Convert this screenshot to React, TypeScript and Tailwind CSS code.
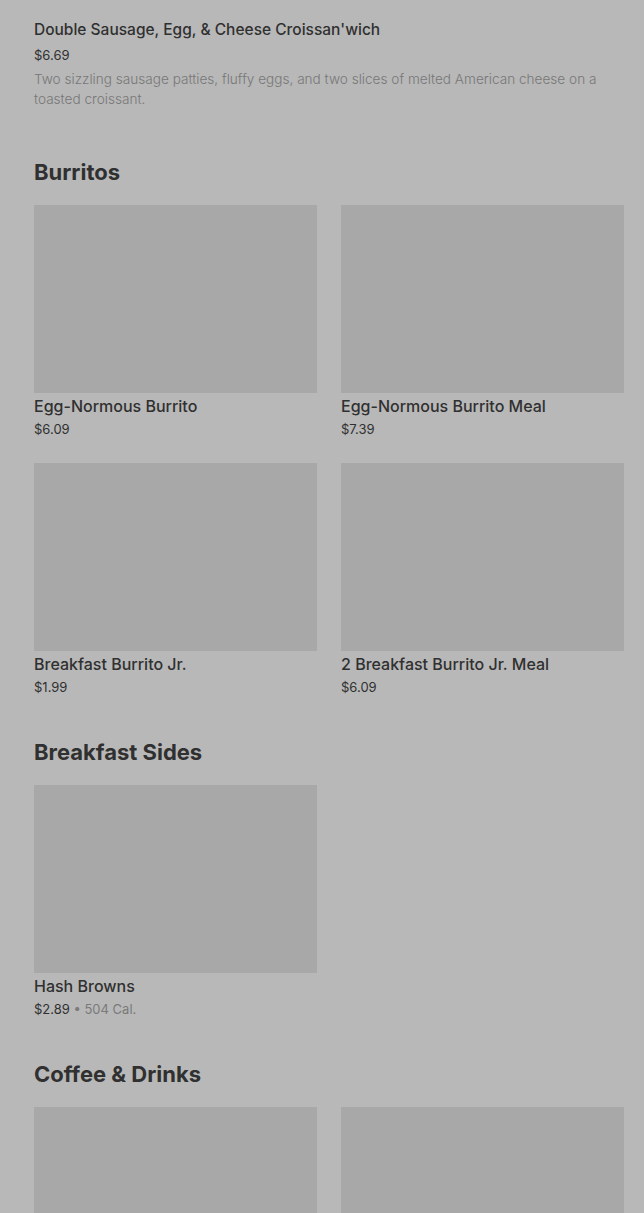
import React from "react";

type Item = { name: string; price: string; cal?: string };

const sections: { title: string; items: Item[] }[] = [
  {
    title: "Burritos",
    items: [
      { name: "Egg-Normous Burrito", price: "$6.09" },
      { name: "Egg-Normous Burrito Meal", price: "$7.39" },
      { name: "Breakfast Burrito Jr.", price: "$1.99" },
      { name: "2 Breakfast Burrito Jr. Meal", price: "$6.09" },
    ],
  },
  {
    title: "Breakfast Sides",
    items: [{ name: "Hash Browns", price: "$2.89", cal: "504 Cal." }],
  },
  {
    title: "Coffee & Drinks",
    items: [
      { name: "", price: "" },
      { name: "", price: "" },
    ],
  },
];

const MenuCard = ({ item }: { item: Item }) => {
  return (
    <div className="flex flex-col">
      <div className="h-[188px] w-full bg-[#a8a8a8]"></div>
      {item.name && (
        <>
          <div className="mt-[1px] text-[16px] leading-6 font-medium text-[#303030]">
            {item.name}
          </div>
          <div className="mt-[1px] text-[13px] leading-5 text-[#303030]">
            {item.price}
            {item.cal && (
              <span className="text-[#7a7a7a]">
                {" "}
                • {item.cal}
              </span>
            )}
          </div>
        </>
      )}
    </div>
  );
};

export default function App() {
  return (
    <div
      className="min-h-screen bg-[#b8b8b8] pl-[34px] pr-[20px] pt-[18px]"
      style={{ fontFamily: "Inter, Roboto, sans-serif" }}
    >
      <div className="pb-[47px]">
        <div className="text-[15.5px] leading-6 font-medium text-[#303030]">
          Double Sausage, Egg, &amp; Cheese Croissan'wich
        </div>
        <div className="text-[13px] leading-5 text-[#303030] mt-[3px]">$6.69</div>
        <p className="text-[13.6px] leading-5 font-light text-[#777777] mt-[4px]">
          Two sizzling sausage patties, fluffy eggs, and two slices of melted
          American cheese on a toasted croissant.
        </p>
      </div>
      {sections.map((section) => (
        <div key={section.title} className="pb-[39px]">
          <h2 className="text-[22px] leading-8 font-bold text-[#303030] mb-[17px]">
            {section.title}
          </h2>
          <div className="grid grid-cols-2 gap-x-[24px] gap-y-[24px]">
            {section.items.map((item, i) => (
              <MenuCard key={section.title + i} item={item} />
            ))}
          </div>
        </div>
      ))}
    </div>
  );
}
